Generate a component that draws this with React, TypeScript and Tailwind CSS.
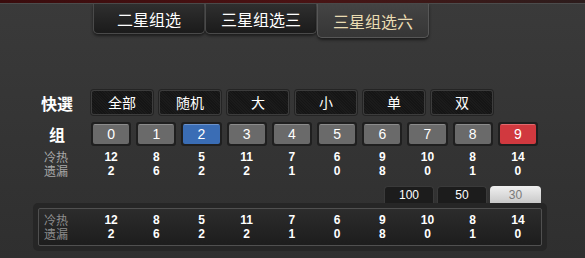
import React from "react";

const CN = { fontFamily: '"Noto Sans CJK SC", "Noto Sans", sans-serif' };
const AR = { fontFamily: '"Liberation Sans", Arial, sans-serif' };

const TABS = ["二星组选", "三星组选三", "三星组选六"];
const QUICK = ["全部", "随机", "大", "小", "单", "双"];
const HOT = [12, 8, 5, 11, 7, 6, 9, 10, 8, 14];
const MISS = [2, 6, 2, 2, 1, 0, 8, 0, 1, 0];

function StatRows({ labelColor }: { labelColor: string }) {
  return (
    <div className="flex items-start">
      <div className={`w-[34px] text-center text-[12px] leading-[14px] ${labelColor}`} style={CN}>
        冷热
        <br />
        遗漏
      </div>
      <div className="ml-[18px] flex flex-col">
        {[HOT, MISS].map((vals, r) => (
          <div key={r} className="grid grid-cols-10 gap-x-[5px] w-[447px] h-[14px] items-center">
            {vals.map((v, i) => (
              <span key={i} className="text-center text-white text-[12px] font-bold leading-[12px]" style={AR}>
                {v}
              </span>
            ))}
          </div>
        ))}
      </div>
    </div>
  );
}

export default function App() {
  return (
    <div className="w-[585px] h-[258px] overflow-hidden bg-gradient-to-b from-[#3a3a3a] to-[#2f2f2f]">
      <div className="h-[3px] bg-gradient-to-r from-[#3a0c0d] via-[#4a1213] to-[#2c1c1c]" />
      <div className="h-px bg-[#4c4c4c]" />

      {/* tabs */}
      <div className="flex items-start pl-[93px]">
        {TABS.map((t, i) => {
          const active = i === 2;
          return (
            <div
              key={t}
              className={
                active
                  ? "w-[112px] h-[34px] flex items-center justify-center rounded-b-[5px] border border-t-0 border-[#575757] bg-gradient-to-b from-[#444] to-[#363636] text-[#eadcb2] text-[16px] shadow-[0_2px_3px_rgba(0,0,0,0.5)]"
                  : "w-[112px] h-[30px] flex items-center justify-center rounded-b-[5px] border border-t-0 border-[#4a4a4a] bg-gradient-to-b from-[#2f2f2f] to-[#1b1b1b] text-white text-[16px] shadow-[0_2px_3px_rgba(0,0,0,0.5)]"
              }
              style={CN}
            >
              {t}
            </div>
          );
        })}
      </div>

      {/* quick select */}
      <div className="flex items-center mt-[52px] pl-[35px]">
        <div className="w-[44px] text-center text-white text-[16px] font-bold leading-none" style={CN}>
          快選
        </div>
        <div className="ml-[12px] flex gap-[6px]">
          {QUICK.map((q) => (
            <div
              key={q}
              className="w-[62px] h-[25px] flex items-center justify-center rounded-[3px] border border-[#3c3c3c] shadow-[0_0_0_1px_#242424] text-white text-[14px] bg-[repeating-linear-gradient(45deg,#1b1b1b_0px,#1b1b1b_1px,#151515_1px,#151515_2px)]"
              style={CN}
            >
              {q}
            </div>
          ))}
        </div>
      </div>

      {/* numbers */}
      <div className="flex items-center mt-[7px] pl-[35px]">
        <div className="w-[44px] text-center text-white text-[16px] font-bold leading-none" style={CN}>
          组
        </div>
        <div className="ml-[12px] grid grid-cols-10 gap-x-[5px] w-[447px]">
          {Array.from({ length: 10 }, (_, n) => {
            const bg =
              n === 2
                ? "bg-[#3a6db5] border-t-[#6c93cc]"
                : n === 9
                ? "bg-[#d1393f] border-t-[#e06a6e]"
                : "bg-[#6a6a6a] border-t-[#8c8c8c]";
            return (
              <div key={n} className="p-[2px] rounded-[3px] bg-[#1f1f1f]">
                <div
                  className={`h-[20px] flex items-center justify-center rounded-[2px] border border-transparent ${bg} text-white text-[14px]`}
                  style={AR}
                >
                  {n}
                </div>
              </div>
            );
          })}
        </div>
      </div>

      {/* stats */}
      <div className="mt-[4px] pl-[39px]">
        <StatRows labelColor="text-[#a8a8a8]" />
      </div>

      {/* period tabs */}
      <div className="flex justify-end pr-[44px] mt-[8px] gap-[3px]">
        {["100", "50", "30"].map((p) => (
          <div
            key={p}
            className={
              p === "30"
                ? "w-[51px] h-[17px] flex items-center justify-center rounded-t-[4px] bg-gradient-to-b from-[#f0f0f0] to-[#c9c9c9] text-[#7a7a7a] text-[12px]"
                : "w-[50px] h-[17px] flex items-center justify-center rounded-t-[4px] bg-[#1c1c1c] border border-b-0 border-[#3a3a3a] text-white text-[12px]"
            }
            style={AR}
          >
            {p}
          </div>
        ))}
      </div>

      {/* bottom panel */}
      <div className="ml-[33px] w-[514px] p-[5px] rounded-[5px] bg-[#262626]">
        <div className="border border-[#505050] rounded-[2px] bg-gradient-to-b from-[#2c2c2c] to-[#1d1d1d] py-[4px]">
          <StatRows labelColor="text-[#8e8e8e]" />
        </div>
      </div>
    </div>
  );
}
